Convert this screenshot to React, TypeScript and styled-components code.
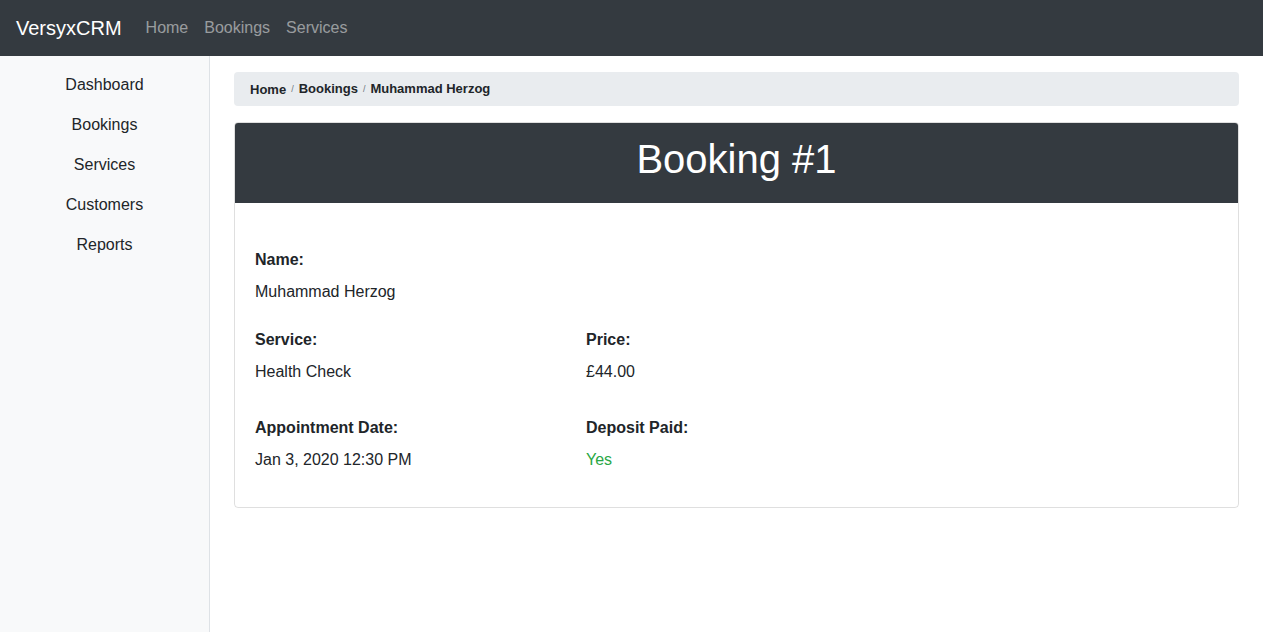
import React from "react";
import styled, { createGlobalStyle } from "styled-components";

const Global = createGlobalStyle`
  * { box-sizing: border-box; }
  html, body { margin: 0; padding: 0; }
  body {
    font-family: "Liberation Sans", Arial, sans-serif;
    font-size: 16px;
    line-height: 1.5;
    color: #212529;
    background: #fff;
  }
`;

const Navbar = styled.nav`
  height: 56px;
  background: #343a40;
  display: flex;
  align-items: center;
  padding: 0 16px;
`;

const Brand = styled.a`
  color: #fff;
  font-size: 20px;
  line-height: 30px;
  margin-right: 16px;
  text-decoration: none;
`;

const NavLinks = styled.div`
  display: flex;
`;

const NavLink = styled.a`
  color: rgba(255, 255, 255, 0.5);
  padding: 8px;
  font-size: 16px;
  line-height: 24px;
  text-decoration: none;
`;

const Layout = styled.div`
  display: flex;
  min-height: calc(100vh - 56px);
`;

const Sidebar = styled.aside`
  width: 210px;
  flex-shrink: 0;
  background: #f8f9fa;
  border-right: 1px solid #dee2e6;
  padding-top: 9px;
  display: flex;
  flex-direction: column;
`;

const SideLink = styled.a`
  display: block;
  text-align: center;
  padding: 8px 16px;
  line-height: 24px;
  color: #212529;
  text-decoration: none;
`;

const Main = styled.main`
  flex: 1;
  padding: 16px 24px;
`;

const Breadcrumb = styled.ol`
  list-style: none;
  margin: 0 0 16px;
  padding: 7px 16px;
  background: #e9ecef;
  border-radius: 4px;
  display: flex;
  align-items: center;
  font-size: 13px;
  line-height: 19px;
  font-weight: 700;
`;

const Crumb = styled.li`
  color: #212529;
  & + &::before {
    content: "/";
    font-size: 9px;
    font-weight: 400;
    color: #6c757d;
    padding: 0 5px;
    vertical-align: 1px;
  }
`;

const Card = styled.section`
  border: 1px solid rgba(0, 0, 0, 0.125);
  border-radius: 4px;
  overflow: hidden;
`;

const CardHeader = styled.header`
  background: #343a40;
  height: 80px;
  display: flex;
  align-items: center;
  justify-content: center;
`;

const Title = styled.h1`
  margin: 0 0 8px;
  color: #fff;
  font-size: 40px;
  font-weight: 400;
  line-height: 48px;
`;

const CardBody = styled.div`
  padding: 45px 20px 35px;
`;

const Grid = styled.div`
  display: grid;
  grid-template-columns: 331px 331px;
`;

const Field = styled.div<{ $span?: boolean; $mb: number }>`
  grid-column: ${(p) => (p.$span ? "1 / -1" : "auto")};
  margin-bottom: ${(p) => p.$mb}px;
`;

const Label = styled.div`
  font-weight: 700;
  line-height: 24px;
  margin-bottom: 8px;
`;

const Value = styled.div<{ $tone?: "success" }>`
  line-height: 24px;
  color: ${(p) => (p.$tone === "success" ? "#28a745" : "#212529")};
`;

export default function App() {
  return (
    <>
      <Global />
      <Navbar>
        <Brand href="#">VersyxCRM</Brand>
        <NavLinks>
          <NavLink href="#">Home</NavLink>
          <NavLink href="#">Bookings</NavLink>
          <NavLink href="#">Services</NavLink>
        </NavLinks>
      </Navbar>
      <Layout>
        <Sidebar>
          <SideLink href="#">Dashboard</SideLink>
          <SideLink href="#">Bookings</SideLink>
          <SideLink href="#">Services</SideLink>
          <SideLink href="#">Customers</SideLink>
          <SideLink href="#">Reports</SideLink>
        </Sidebar>
        <Main>
          <Breadcrumb>
            <Crumb>Home</Crumb>
            <Crumb>Bookings</Crumb>
            <Crumb>Muhammad Herzog</Crumb>
          </Breadcrumb>
          <Card>
            <CardHeader>
              <Title>Booking #1</Title>
            </CardHeader>
            <CardBody>
              <Grid>
                <Field $span $mb={24}>
                  <Label>Name:</Label>
                  <Value>Muhammad Herzog</Value>
                </Field>
                <Field $mb={32}>
                  <Label>Service:</Label>
                  <Value>Health Check</Value>
                </Field>
                <Field $mb={32}>
                  <Label>Price:</Label>
                  <Value>£44.00</Value>
                </Field>
                <Field $mb={0}>
                  <Label>Appointment Date:</Label>
                  <Value>Jan 3, 2020 12:30 PM</Value>
                </Field>
                <Field $mb={0}>
                  <Label>Deposit Paid:</Label>
                  <Value $tone="success">Yes</Value>
                </Field>
              </Grid>
            </CardBody>
          </Card>
        </Main>
      </Layout>
    </>
  );
}
